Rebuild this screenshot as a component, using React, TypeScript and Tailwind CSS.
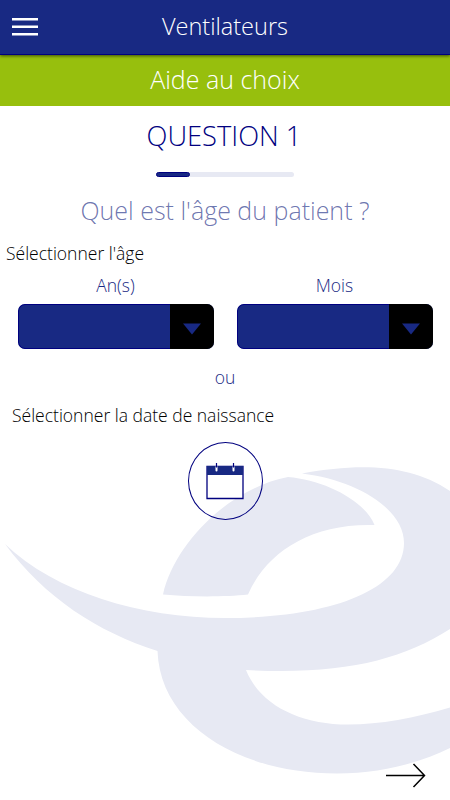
import { useState } from 'react';

const FIELDS = [
  { id: 'years', label: 'An(s)' },
  { id: 'months', label: 'Mois' },
];

function Watermark() {
  return (
    <svg className="absolute inset-0 -z-10" width="450" height="800" viewBox="0 0 450 800" fill="#e7e9f3">
      <path d="M163 594.5C174 545 227 489 288 477C325 480 365 501 374.500 525C310 523 266 553 248 594.500C225 597 190 597 163 594.500Z" />
      <path d="M5 544C45 598 98 632 157.500 651C160 725 240 773.500 337 773.500C380 773.500 420 763 450 748V707.500C415 718 380 724.500 348 724.500C300 724.500 260 705 246 670C340 675 400 661 450 629V491C410 464 360 463 302 473.500C355 480 404 508 404 543C404 590 330 618 225 618C140 618 55 592 5 544Z" />
    </svg>
  );
}

function MenuIcon() {
  return (
    <svg width="26" height="20" viewBox="0 0 26 20" fill="#fff">
      <rect y="1" width="26" height="2.500" />
      <rect y="8.500" width="26" height="2.500" />
      <rect y="16" width="26" height="2.500" />
    </svg>
  );
}

function CalendarIcon() {
  return (
    <svg width="38" height="38" viewBox="0 0 38 38">
      <path d="M1 4.500H37V36.500H1Z" fill="#fff" stroke="#00007f" strokeWidth="1.300" />
      <path d="M1 4H37V13H1Z" fill="#182983" />
      <path d="M10.500 5V8.500M27.500 5V8.500" stroke="#fff" strokeWidth="2" strokeLinecap="round" />
      <path d="M10.500 1V5.500M27.500 1V5.500" stroke="#00007f" strokeWidth="1.200" />
    </svg>
  );
}

function AgeSelect({ label }: { label: string }) {
  return (
    <div className="w-[196px]">
      <div className="h-[34px] text-center text-[17.5px] leading-[30px] text-[#182983]">{label}</div>
      <button aria-label={label} className="flex h-[45px] w-full overflow-hidden rounded-[7px] bg-[#182983]">
        <span className="h-full flex-1 rounded-l-[7px] border border-r-0 border-[#00007f]" />
        <span className="flex h-full w-[44px] items-center justify-center bg-black pt-[4px]">
          <svg width="18" height="12" viewBox="0 0 18 12" fill="#182983">
            <path d="M0 0.500H18L9 11.500Z" />
          </svg>
        </span>
      </button>
    </div>
  );
}

export default function App() {
  const [step] = useState(1);

  return (
    <div className="relative isolate flex h-[800px] w-[450px] flex-col overflow-hidden bg-white font-['Open_Sans',sans-serif] font-light">
      <Watermark />

      <header className="z-10 grid h-[55px] shrink-0 grid-cols-[50px_1fr_50px] items-center border-b border-[#00007f] bg-[#182983] text-white shadow-[0_1px_3px_rgba(0,0,0,0.6)]">
        <button aria-label="Menu" className="ml-3">
          <MenuIcon />
        </button>
        <h1 className="text-center text-[23.5px] leading-[52px] pb-[2px]">Ventilateurs</h1>
      </header>

      <h2 className="h-[51px] shrink-0 bg-[#97bf0d] text-center text-[25px] leading-[49px] text-white">Aide au choix</h2>

      <main className="flex flex-1 flex-col">
        <h3 className="h-[66px] pr-[2px] text-center text-[27.3px] leading-[60px] text-[#00007f]">QUESTION {step}</h3>
        <div className="mx-auto h-[5px] w-[138px] rounded-full bg-[#e7e9f3]">
          <div className="h-full w-[34px] rounded-full border border-[#00007f] bg-[#182983]" />
        </div>
        <p className="h-[63px] text-center text-[25px] leading-[67px] text-[#182983]/65">Quel est l'âge du patient ?</p>

        <p className="h-[30px] pl-[6px] text-[17.5px] leading-[27px] text-black">Sélectionner l'âge</p>
        <div className="flex justify-center gap-[23px]">
          {FIELDS.map(f => <AgeSelect key={f.id} label={f.label} />)}
        </div>

        <p className="h-[51px] text-center text-[17.5px] leading-[57px] text-[#182983]">ou</p>
        <p className="h-[42px] pl-[12px] text-[17.5px] leading-[30px] text-black">Sélectionner la date de naissance</p>
        <button aria-label="Date de naissance" className="mx-auto flex h-[78px] w-[75px] items-center justify-center rounded-[50%] border border-[#00007f]">
          <CalendarIcon />
        </button>

        <button aria-label="Suivant" className="mt-auto mr-[24px] mb-[12px] self-end">
          <svg width="40" height="25" viewBox="0 0 40 25" fill="none" stroke="#000" strokeWidth="1.500">
            <path d="M0 12.500H38.500M27.500 1L38.500 12.500L27.500 24" />
          </svg>
        </button>
      </main>
    </div>
  );
}
